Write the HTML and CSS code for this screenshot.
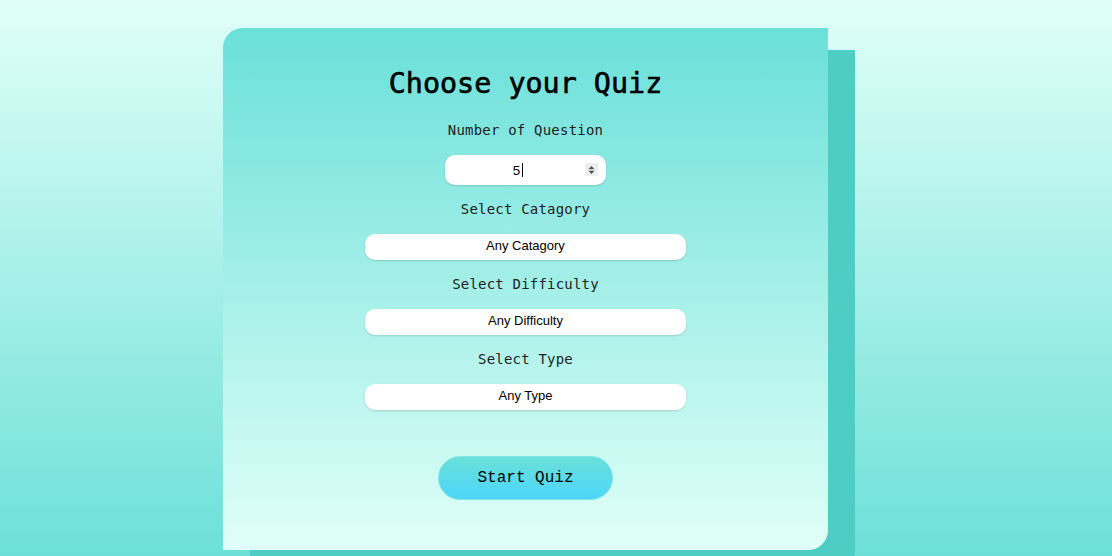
FILE: index.html
```html
<!DOCTYPE html>
<html lang="en">
<head>
<meta charset="utf-8">
<title>Choose your Quiz</title>
<link rel="stylesheet" href="styles.css">
</head>
<body>
<main class="page">
  <section class="card">
    <h1 class="title">Choose your Quiz</h1>
    <form class="form">
      <label class="label" for="num">Number of Question</label>
      <div class="num-wrap">
        <input class="num" id="num" type="text" value="5">
        <span class="caret"></span>
        <span class="spin"><svg width="7" height="10" viewBox="0 0 7 10"><path d="M3.5 1 L6.5 4.2 H0.5 Z M3.5 9 L6.5 5.8 H0.5 Z" fill="#555"/></svg></span>
      </div>
      <label class="label" for="cat">Select Catagory</label>
      <select class="select" id="cat"><option>Any Catagory</option></select>
      <label class="label" for="dif">Select Difficulty</label>
      <select class="select" id="dif"><option>Any Difficulty</option></select>
      <label class="label" for="typ">Select Type</label>
      <select class="select" id="typ"><option>Any Type</option></select>
      <button class="start" type="button">Start Quiz</button>
    </form>
  </section>
</main>
</body>
</html>
```
FILE: styles.css
```css
html, body {
  margin: 0;
  padding: 0;
  height: 556px;
  overflow: hidden;
}
body {
  background: linear-gradient(to bottom, #e0fff8 0%, #6ce0d8 100%);
}
.page {
  padding-top: 28px;
  padding-left: 223px;
}
.card {
  width: 605px;
  height: 522px;
  box-sizing: border-box;
  border-radius: 20px 0 20px 0;
  background: linear-gradient(to bottom, #6ae0d9 0%, #e0fff8 100%);
  box-shadow: 27px 22px 0 #4ecdc4;
  padding-top: 38px;
  display: flex;
  flex-direction: column;
  align-items: center;
}
.title {
  margin: 0;
  font-family: "DejaVu Sans Mono", monospace;
  font-size: 28.4px;
  line-height: 36px;
  font-weight: normal;
  -webkit-text-stroke: 0.6px #000;
  color: #000;
}
.form {
  margin-top: 19px;
  display: flex;
  flex-direction: column;
  align-items: center;
  gap: 15px;
}
.label {
  font-family: "DejaVu Sans Mono", monospace;
  font-size: 14px;
  letter-spacing: 0.2px;
  line-height: 19px;
  height: 19px;
  color: #222;
}
.num-wrap {
  position: relative;
  width: 161px;
  height: 30px;
}
.num {
  width: 100%;
  height: 100%;
  box-sizing: border-box;
  border: none;
  border-radius: 10px;
  background: #fff;
  box-shadow: 0 1px 2px rgba(0,0,0,0.15);
  font-family: "Liberation Sans", Arial, sans-serif;
  font-size: 13.33px;
  text-align: center;
  padding: 0 18px 0 0;
  color: #000;
  outline: none;
}
.caret {
  position: absolute;
  left: 77px;
  top: 8px;
  width: 1px;
  height: 14px;
  background: #000;
}
.spin {
  position: absolute;
  right: 8px;
  top: 8px;
  width: 13px;
  height: 13px;
  background: #eee;
  display: flex;
  align-items: center;
  justify-content: center;
}
.select {
  -webkit-appearance: none;
  appearance: none;
  width: 321px;
  height: 26px;
  box-sizing: border-box;
  border: none;
  border-radius: 10px;
  background: #fff;
  box-shadow: 0 1px 2px rgba(0,0,0,0.15);
  font-family: "Liberation Sans", Arial, sans-serif;
  font-size: 13px;
  line-height: 16px;
  color: #000;
  text-align: center;
  text-align-last: center;
  padding: 4px 0 6px 0;
  outline: none;
}
.start {
  margin-top: 31px;
  width: 175px;
  height: 44px;
  border: 1px solid #7fe4e6;
  border-radius: 22px;
  background: linear-gradient(to bottom, #6ae0d8 0%, #4cd6fb 100%);
  font-family: "Liberation Mono", "Courier New", monospace;
  font-size: 16px;
  color: #000;
  cursor: pointer;
}
```
